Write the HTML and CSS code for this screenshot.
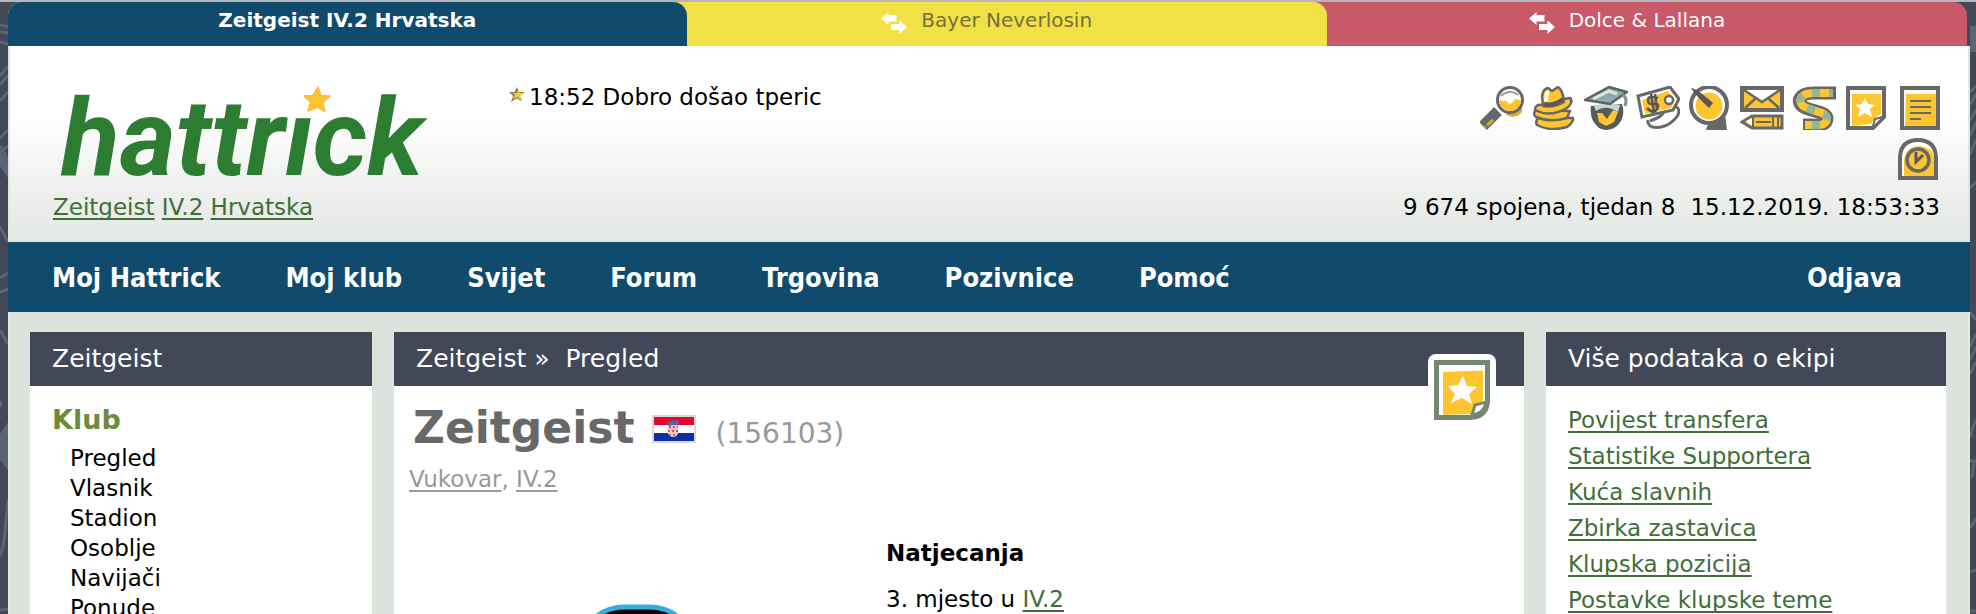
FILE: index.html
```html
<!DOCTYPE html>
<html lang="hr">
<head>
<meta charset="utf-8">
<title>Zeitgeist » Pregled</title>
<link rel="stylesheet" href="styles.css">
</head>
<body>
<svg class="backdrop backdrop-left" width="8" height="614" viewBox="0 0 8 614" aria-hidden="true">
  <g stroke="#5a6472" stroke-width="3" fill="none">
    <path d="M0 23 8 25M0 30 8 31M0 40 8 42M0 74 8 64M0 83 8 73M0 99 8 90M0 136 8 128M0 150 8 144M0 144 8 158M0 225 8 240M0 276 8 271M0 290 8 287M0 328 8 342M8 498 4 540 0 555M0 608 8 607"/>
  </g>
  <path fill="#5a6472" d="M0 150 8 158V176L0 164zM0 398 3 402 0 406zM0 432 8 420V468L0 458z"/>
</svg>
<svg class="backdrop backdrop-right" width="6" height="614" viewBox="0 0 6 614" aria-hidden="true">
  <g stroke="#5a6472" stroke-width="3" fill="none">
    <path d="M0 90 6 84M0 103 6 92M0 118 6 108M0 134 6 120M0 152 6 138M0 186 6 180M0 310 6 318M0 345 6 332M0 358 6 345M0 372 6 360M1 435Q2 424 6 418M0 459H6M2 476 4 460M0 526 6 517M0 570 6 568M0 609H6"/>
  </g>
  <path fill="#5a6472" d="M0 24H6V50H0z"/>
</svg>

<div class="page">
  <ul class="tabs">
    <li class="tab tab-blue"><a class="tab-link" href="#">Zeitgeist IV.2 Hrvatska</a></li>
    <li class="tab tab-yellow"><a class="tab-link" href="#">
      <svg class="swap" width="26" height="22" viewBox="0 0 26 22" aria-hidden="true"><path fill="#fff" d="M0 6.500 7.500 0V3H15.500V9.500H7.500V13zM26 15 18.500 8.500V12H10V18H18.500V22z"/></svg>Bayer Neverlosin</a></li>
    <li class="tab tab-red"><a class="tab-link" href="#">
      <svg class="swap" width="26" height="22" viewBox="0 0 26 22" aria-hidden="true"><path fill="#fff" d="M0 6.500 7.500 0V3H15.500V9.500H7.500V13zM26 15 18.500 8.500V12H10V18H18.500V22z"/></svg>Dolce &amp; Lallana</a></li>
  </ul>

  <header class="header">
    <div class="brand">
      <a class="logo" href="#">hattrick<svg class="logo-star" width="40" height="34" viewBox="0 0 40 34" aria-hidden="true"><circle cx="15" cy="17" r="12" fill="#fff"/><path fill="#fdc52f" stroke="#fdb944" stroke-width="1.500" stroke-linejoin="round" d="M26 3 29 11.500 38 12 31 18.500 33 27.500 25.500 23 16 27 18.500 18 12 12 21 11.500z"/></svg></a>
      <p class="crumbs"><a href="#">Zeitgeist</a> <a href="#">IV.2</a> <a href="#">Hrvatska</a></p>
    </div>
    <p class="ticker"><svg width="16" height="16" viewBox="0 0 16 16" aria-hidden="true"><path fill="#8b8464" d="M8 0 10 5H16L11 9 13 14 7.500 11.500 2 15 4 9 0 5H5.500z"/><path fill="#f4c92e" d="M9.500 2 10.500 6H15L11 9 12.500 13 8 10 4 12 6 8 4 6H8z"/></svg>18:52 Dobro došao tperic</p>
    <div class="tools">
      <nav class="icons" aria-label="Prečaci">
        <a href="#" aria-label="Traži"><svg width="44" height="44" viewBox="0 0 44 44">
          <path d="M26 28C30 32 39 32 42 25V20L28 24z" fill="#dba92c"/>
          <path d="M18 25 3 40" stroke="#686868" stroke-width="11"/><path d="M13 34 4 42" stroke="#dba92c" stroke-width="3" stroke-dasharray="8 2"/>
          <circle cx="30" cy="14" r="12.500" fill="#fff" stroke="#686868" stroke-width="3"/>
          <path d="M19 14Q24 16 26 14 30 22 35 13L41 14A11 11 0 0 1 19 14z" fill="#fdc52f"/><path d="M21 10Q30 2 38 9" stroke="#9a9a9a" stroke-width="2" fill="none"/></svg></a>
        <a href="#" aria-label="Menadžer"><svg width="44" height="44" viewBox="0 0 44 44"><g fill="#fdc52f" stroke="#686868" stroke-width="2.500" stroke-linejoin="round">
          <path d="M6 32Q3 36 5 39 18 46 35 41 42 36 41 32z"/>
          <path d="M4 24Q0 28 4 31 18 37 35 32L38 25z"/>
          <path d="M10 19Q3 18 3 24 18 32 35 22 42 16 38 12L32 13z"/>
          <path d="M11 20 10 10Q11 3 16 2L20 5 26 1Q30 4 31 10L32 16Q22 22 11 20z"/></g>
          <path d="M12 18Q22 20 31 13" stroke="#575757" stroke-width="4" fill="none"/><path d="M12 16 13 6 17 4 16 15z" fill="#fff"/></svg></a>
        <a href="#" aria-label="Mladi"><svg width="44" height="44" viewBox="0 0 44 44">
          <path d="M7 20Q5 34 15 42 25 47 34 39 42 30 38 18z" fill="#575a5a"/>
          <path d="M10 20Q20 16 36 19L34 26Q22 18 12 25z" fill="#c4d8d6"/>
          <path d="M1 14 25 1 43 6 26 18z" fill="#8fa9a9" stroke="#5b6262" stroke-width="2.500"/><path d="M9 13 25 5 33 8" stroke="#d8e6e4" stroke-width="3" fill="none"/>
          <path d="M38 9Q44 11 41 20" stroke="#7f9292" stroke-width="3" fill="none"/>
          <path d="M13 27 18 27 23 33 29 24 34 26 30 36 22 40 15 36z" fill="#fdc52f"/></svg></a>
        <a href="#" aria-label="Transferi"><svg width="44" height="44" viewBox="0 0 44 44">
          <path d="M12 34C10 44 28 44 38 34S40 17 33 21 30 30 14 35" fill="#fff" stroke="#686868" stroke-width="3"/>
          <path d="M2 10 34 1 43 13 37 24 6 31z" fill="#fff" stroke="#686868" stroke-width="3"/><path d="M6 14 32 5 39 14 35 22 9 28z" fill="#fdc52f"/>
          <circle cx="33" cy="14" r="4" fill="#fff" stroke="#686868" stroke-width="2.500"/>
          <path d="M22 12Q12 9 12 14T18 18 21 23 11 22M15 8 18 26M19 8 21 24" stroke="#575757" stroke-width="2.500" fill="none"/></svg></a>
        <a href="#" aria-label="Uživo"><svg width="44" height="44" viewBox="0 0 44 44">
          <path d="M20 38 32 32 37 28 39 44H18z" fill="#686868"/>
          <circle cx="21" cy="19" r="18" fill="#fff" stroke="#686868" stroke-width="4"/><circle cx="21" cy="20" r="13.500" fill="#fdc52f"/>
          <path d="M3 2Q8 2 25 17L21 22Q8 10 3 2z" fill="#575757"/><path d="M21 39 34 31 38 44H20z" fill="#686868"/></svg></a>
        <a href="#" aria-label="Pošta"><svg width="44" height="44" viewBox="0 0 44 44">
          <path d="M2 2H42V24H2z" fill="#fdc52f" stroke="#686868" stroke-width="4"/><path d="M5 4H38L22 16z" fill="#fff"/><path d="M4 4 22 16 40 4M5 22 16 12M39 22 28 12" stroke="#686868" stroke-width="2.500" fill="none"/>
          <path d="M2 36 12 30H42V42H12z" fill="#fdc52f" stroke="#686868" stroke-width="3"/><path d="M6 35 12 32V40z" fill="#fff"/><path d="M13 30V42M33 30V42M38 30V42M16 36H31" stroke="#686868" stroke-width="2"/></svg></a>
        <a href="#" aria-label="Navijači"><svg width="44" height="44" viewBox="0 0 44 44">
          <path d="M44 7H22C6 7 5 16 10 20 19 26 35 25 35 33 34 41 24 39 11 39" stroke="#686868" stroke-width="13" fill="none"/>
          <path d="M41 7H22C7 7 6 16 11 20 20 26 35 25 35 33 34 41 24 39 13 39" stroke="#fdc52f" stroke-width="8" fill="none"/>
          <path d="M41 7H22C7 7 6 16 11 20 20 26 35 25 35 33 34 41 24 39 13 39" stroke="#93b795" stroke-width="8" stroke-dasharray="8 9" stroke-dashoffset="-13" fill="none"/></svg></a>
        <a href="#" aria-label="Oznake"><svg width="44" height="44" viewBox="0 0 44 44">
          <path d="M4 2H40V31L29 42H4z" fill="#fff" stroke="#686868" stroke-width="4"/><path d="M8 8H37V28L32 31 27 38 8 40z" fill="#fdc52f"/><path d="M29 40 31 33 38 31" fill="#fff" stroke="#686868" stroke-width="2"/>
          <path d="M21 12 24 18 31 19 26 23 28 31 21 27 14 31 16 23 11 19 18 18z" fill="#fff"/></svg></a>
        <a href="#" aria-label="Bilješke"><svg width="44" height="44" viewBox="0 0 44 44">
          <path d="M6 2H42V42H6z" fill="#fff" stroke="#686868" stroke-width="4"/><path d="M10 8H40V40H9z" fill="#fdc52f"/><path d="M14 15H35M14 21H35M14 27H35M14 33H25" stroke="#686868" stroke-width="2"/></svg></a>
        <a href="#" aria-label="Sat"><svg width="44" height="44" viewBox="0 0 44 44">
          <path d="M4 40V19Q5 2 22 2T40 19V40z" fill="#fff" stroke="#686868" stroke-width="4"/><path d="M8 38V22Q10 8 24 8 36 10 38 18V38z" fill="#fdc52f"/>
          <circle cx="22" cy="22" r="11" fill="#fdc52f" stroke="#686868" stroke-width="3.500"/><path d="M20 14V24L27 17" stroke="#575757" stroke-width="3" fill="none"/></svg></a>
      </nav>
      <p class="status"><span>9 674 spojena, tjedan 8</span><span>15.12.2019. 18:53:33</span></p>
    </div>
  </header>

  <nav class="menu">
    <a href="#">Moj Hattrick</a><a href="#">Moj klub</a><a href="#">Svijet</a><a href="#">Forum</a><a href="#">Trgovina</a><a href="#">Pozivnice</a><a href="#">Pomoć</a><a class="logout" href="#">Odjava</a>
  </nav>

  <div class="columns">
    <aside class="panel">
      <h2 class="panel-head">Zeitgeist</h2>
      <div class="side-body">
        <h3 class="group">Klub</h3>
        <ul class="side-list">
          <li><a href="#">Pregled</a></li><li><a href="#">Vlasnik</a></li><li><a href="#">Stadion</a></li><li><a href="#">Osoblje</a></li><li><a href="#">Navijači</a></li><li><a href="#">Ponude</a></li>
        </ul>
      </div>
    </aside>

    <main class="panel main">
      <h2 class="panel-head"><a href="#">Zeitgeist</a> » <a class="current" href="#">Pregled</a></h2>
      <a class="bookmark" href="#" aria-label="Oznaka"><svg width="56" height="60" viewBox="0 0 56 60">
        <path d="M2.500 2.500H53.500V42Q52 57 36 57.500H2.500z" fill="#fff" stroke="#73896f" stroke-width="5"/><path d="M9 12 49 10.500V41L40 45 37 54 9 55z" fill="#fdc52f"/><path d="M38 55 41 45 52 42Q50 54 38 55z" fill="#fff" stroke="#73896f" stroke-width="3"/>
        <path d="M29 16 33 26 43 27 35 34 38 44 28 38 17 43 21 34 14 26 24 25z" fill="#fff"/></svg></a>
      <div class="team">
        <h1 class="team-name">Zeitgeist
          <svg class="flag" width="44" height="28" viewBox="0 0 44 28" aria-label="Hrvatska"><path fill="#d8d8d8" d="M0 0H44V28H0z"/><path fill="#e30a2c" d="M2 2H42V10H2z"/><path fill="#fff" d="M2 10H42V18H2z"/><path fill="#0b32a0" d="M2 18H42V26H2z"/><path fill="#f7c6cc" d="M16 10H26V18Q25 22 21 22T16 18z"/><path d="M17 12H26M16 16H26M17 20H24" stroke="#dc5368" stroke-width="2" stroke-dasharray="2 2"/><path fill="#5c63a4" d="M16 7 21 5 27 6V9L22 10 16 11z"/></svg>
          <span class="team-id">(156103)</span></h1>
        <p class="place"><a href="#">Vukovar</a>, <a href="#">IV.2</a></p>
        <div class="overview">
          <div class="avatar"><svg width="140" height="120" viewBox="0 0 140 120" aria-hidden="true"><path fill="#000" stroke="#35ade0" stroke-width="5" d="M6 60C16 16 34 3 58 3H82C106 3 124 16 134 60V130H6z"/></svg></div>
          <section>
            <h3 class="section-title">Natjecanja</h3>
            <p>3. mjesto u <a href="#">IV.2</a></p>
          </section>
        </div>
      </div>
    </main>

    <aside class="panel">
      <h2 class="panel-head">Više podataka o ekipi</h2>
      <ul class="more-list">
        <li><a href="#">Povijest transfera</a></li><li><a href="#">Statistike Supportera</a></li><li><a href="#">Kuća slavnih</a></li><li><a href="#">Zbirka zastavica</a></li><li><a href="#">Klupska pozicija</a></li><li><a href="#">Postavke klupske teme</a></li>
      </ul>
    </aside>
  </div>
</div>
</body>
</html>
```
FILE: styles.css
```css
* { box-sizing: border-box; }

body {
  margin: 0;
  height: 100vh;
  overflow: hidden;
  border-top: 2px solid #b5b6b9;
  background: #424857;
  color: #000;
  font: 23px/30px Verdana, "DejaVu Sans", sans-serif;
}

h1, h2, h3, p, ul { margin: 0; padding: 0; font-size: inherit; }
ul { list-style: none; }
svg { display: block; }
a { color: #3f6e38; text-underline-offset: 3px; text-decoration-thickness: 2px; text-decoration-skip-ink: none; }

.backdrop { position: absolute; top: 2px; z-index: -1; }
.backdrop-left { left: 0; }
.backdrop-right { right: 0; }

.page {
  display: flex;
  flex-direction: column;
  min-height: 100%;
  margin: 0 6px 0 8px;
}

.tabs { display: flex; margin-right: 3px; }
.tab { flex: 1; }
.tab-blue { flex-grow: 1.06; background: #f2e146; border-top-left-radius: 14px; }
.tab-yellow { background: #c95869; }
.tab-link {
  display: flex;
  justify-content: center;
  gap: 14px;
  height: 44px;
  padding: 3px 40px 0 0;
  border-top-right-radius: 14px;
  font-size: 20px;
  text-decoration: none;
}
.tab-blue .tab-link { padding-right: 0; border-top-left-radius: 14px; background: #104a6c; color: #fff; font-weight: bold; }
.tab-yellow .tab-link { background: #f2e146; color: #77703a; }
.tab-red .tab-link { background: #c95869; color: #fff; }
.swap { margin-top: 7px; }

.header {
  display: flex;
  min-height: 196px;
  padding: 40px 28px 20px 43px;
  border: solid #e2e8e1;
  border-width: 0 2px;
  background: linear-gradient(#fff 35%, #e2e6e2);
}
.brand { display: flex; flex-direction: column; justify-content: space-between; width: 456px; }
.logo {
  position: relative;
  align-self: flex-start;
  padding-left: 8px;
  color: #2c7d32;
  font: italic bold 108px/104px Roboto, sans-serif;
  text-decoration: none;
}
.logo-star { position: absolute; top: -2px; right: 91px; }
.ticker { display: flex; gap: 4px; flex: 1; margin-top: -4px; }
.ticker svg { margin-top: 5px; }
.tools { display: flex; flex-direction: column; justify-content: space-between; align-items: flex-end; }
.icons { display: flex; flex-wrap: wrap; justify-content: flex-end; gap: 8px; width: 460px; }
.status { display: flex; gap: 15px; }

.menu {
  display: flex;
  gap: 65px;
  padding: 1px 68px 0 44px;
  background: #104a6c;
  font: bold 27px/69px "DejaVu Sans Condensed", "DejaVu Sans", sans-serif;
}
.menu a { color: #fff; text-decoration: none; }
.menu .logout { margin-left: auto; }

.columns {
  display: grid;
  grid-template-columns: 342px 1fr 400px;
  gap: 22px;
  flex: 1;
  padding: 20px 22px 0 20px;
  border: solid #e3e9e1;
  border-width: 0 2px;
  background: #dce2dc;
}
.panel { background: #fff; }
.panel-head {
  padding: 0 22px;
  background: #424857;
  color: #fff;
  font-size: 25px;
  font-weight: normal;
  line-height: 54px;
}
.panel-head a { color: #fff; text-decoration: none; }
.panel-head .current { margin-left: 8px; }
.side-body { padding: 16px 22px; }
.group { margin-bottom: 5px; color: #6b8d3b; font-size: 27px; line-height: 36px; }
.side-list { padding-left: 18px; }
.side-list a { color: #000; text-decoration: none; }
.more-list { padding: 16px 22px; line-height: 36px; }

.main { position: relative; }
.bookmark { position: absolute; top: 22px; right: 28px; padding: 6px; border-radius: 8px; background: #fff; }
.team { padding: 15px; }
.team-name { display: flex; align-items: baseline; padding-left: 4px; color: #686868; font-size: 44px; line-height: 54px; }
.flag { margin: 0 20px 0 17px; }
.team-id { color: #999; font-size: 28px; font-weight: normal; }
.place { margin-top: 3px; color: #999; }
.place a { color: #999; }
.overview { display: grid; grid-template-columns: 477px 1fr; margin-top: 44px; }
.avatar { padding: 66px 0 0 158px; }
.section-title { margin-bottom: 16px; }
```
